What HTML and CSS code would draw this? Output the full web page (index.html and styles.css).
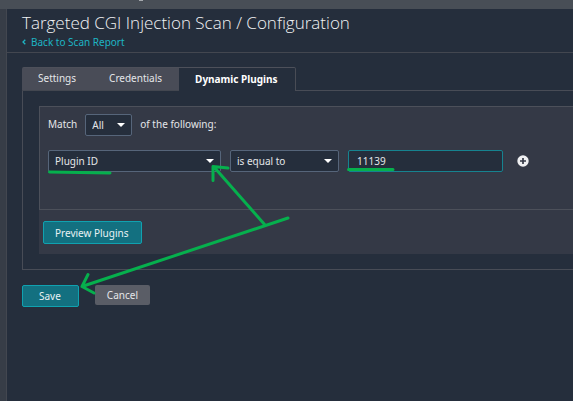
FILE: index.html
```html
<!DOCTYPE html>
<html lang="en">
<head>
<meta charset="utf-8">
<title>Targeted CGI Injection Scan / Configuration</title>
<link rel="stylesheet" href="styles.css">
</head>
<body>
<div class="topbar"></div>
<div class="shell">
  <aside class="rail"></aside>
  <main class="main">
    <header class="header">
      <h1 class="title">Targeted CGI Injection Scan / Configuration</h1>
      <a class="back" href="#"><svg class="chevron" viewBox="0 0 4 6" aria-hidden="true"><path d="M3.3 .7 1 3l2.3 2.3"/></svg>Back to Scan Report</a>
    </header>
    <form class="content">
      <nav class="tabs">
        <a class="tab" href="#">Settings</a>
        <a class="tab" href="#">Credentials</a>
        <a class="tab active" href="#">Dynamic Plugins</a>
      </nav>
      <section class="panel">
        <div class="filters">
          <div class="match">
            <label for="match">Match</label>
            <span class="select small"><select id="match"><option>All</option></select></span>
            <span>of the following:</span>
          </div>
          <div class="rule">
            <span class="select field"><select aria-label="Field"><option>Plugin ID</option></select></span>
            <span class="select operator"><select aria-label="Operator"><option>is equal to</option></select></span>
            <input class="value" type="text" aria-label="Value" value="11139">
            <button class="add" type="button" aria-label="Add filter"><svg viewBox="0 0 12 12"><circle cx="6" cy="6" r="5.7"/><path d="M6 3v6M3 6h6"/></svg></button>
          </div>
        </div>
        <div class="preview">
          <button class="button primary wide" type="button">Preview Plugins</button>
        </div>
      </section>
      <div class="actions">
        <button class="button primary" type="button">Save</button>
        <button class="button cancel" type="button">Cancel</button>
      </div>
    </form>
  </main>
</div>
<svg class="marks" width="573" height="401" viewBox="0 0 573 401" aria-hidden="true">
  <path d="M49.500 172 80 172.500 110 173M348.500 169.500H393"/>
  <path d="M265 225 214 167M228 168 213 166.500 213 180.500"/>
  <path d="M288 218 82 286.500M88 274.500 82 286.500 94 293"/>
</svg>
</body>
</html>
```
FILE: styles.css
```css
* { box-sizing: border-box; }

body {
  margin: 0;
  min-height: 100vh;
  display: flex;
  flex-direction: column;
  position: relative;
  overflow: hidden;
  background: #252e3c;
  color: #e4e6e9;
  font: 10px/16px "Noto Sans", "Open Sans", sans-serif;
}

a { text-decoration: none; }

button, input, select {
  font: inherit;
  color: inherit;
  margin: 0;
}

.topbar { height: 9px; background: #484e56; }

.topbar::before {
  content: "";
  display: block;
  width: 4px;
  height: 1px;
  margin-left: 139px;
  background: #a5a9ad;
}

.shell { flex: 1; display: flex; }

.rail {
  width: 7px;
  background: #373d47;
  border-right: 1px solid #434750;
}

.main { flex: 1; min-width: 0; }

.header {
  height: 44px;
  padding: 3px 15px 0;
  border-bottom: 1px solid #434750;
}

.title {
  margin: 0;
  font: 300 17px/22px "Open Sans", sans-serif;
  color: #f1f2f4;
  white-space: nowrap;
}

.back {
  display: flex;
  align-items: center;
  gap: 5px;
  color: #1eb5c4;
}

.chevron {
  width: 4px;
  height: 6px;
  fill: none;
  stroke: currentColor;
  stroke-width: 1.3;
}

.content { padding: 14px 0 0 15px; }

.tabs { display: flex; height: 23px; }

.tab {
  height: 24px;
  padding: 2px 17px 0 16px;
  background: #494c57;
  border-top: 1px solid #4d505a;
  border-bottom: 1px solid #434750;
  color: #e4e6e9;
}

.tab:first-child { border-radius: 2px 0 0; }

.tab.active {
  height: 24px;
  padding-top: 3px;
  background: #252e3c;
  border-right: 1px solid #494c55;
  border-bottom: 0;
  border-radius: 0 2px 0 0;
  color: #fff;
  font-weight: 700;
  position: relative;
}

.panel {
  padding: 15px 0 15px 16px;
  border: 1px solid #484c56;
  border-right: 0;
}

.filters {
  height: 104px;
  padding: 7px 8px 0;
  background: #343946;
  border: 1px solid #4c505a;
  border-right: 0;
}

.match {
  display: flex;
  align-items: center;
  gap: 8px;
  height: 22px;
  line-height: 14px;
}

.match label, .match > span:last-child { padding-bottom: 2px; }

.rule {
  display: flex;
  align-items: center;
  gap: 9px;
  margin-top: 14px;
}

.select { position: relative; height: 22px; }

.select::after {
  content: "";
  position: absolute;
  right: 7px;
  top: 9px;
  border: 4px solid transparent;
  border-top-color: #fff;
  border-bottom: 0;
  pointer-events: none;
}

.select select, .value {
  display: block;
  width: 100%;
  height: 22px;
  padding: 0 6px;
  appearance: none;
  background: #252e3c;
  border: 1px solid #56657a;
  border-radius: 2px;
  outline: 0;
}

.small { width: 47px; }
.field { width: 173px; }
.operator { width: 109px; }

.value {
  width: 155px;
  padding: 0 8px;
  border-color: #168390;
}

.add {
  width: 12px;
  height: 12px;
  margin-left: 5px;
  padding: 0;
  border: 0;
  background: none;
}

.add svg { display: block; width: 12px; height: 12px; }
.add circle { fill: #eff0f2; }
.add path { stroke: #343946; stroke-width: 1.7; }

.preview {
  height: 45px;
  padding: 11px 4px;
  background: #343946;
}

.filters + .preview { margin-top: -1px; border-top: 1px solid #4c505a; padding-top: 11px; }

.actions {
  display: flex;
  gap: 16px;
  padding-top: 15px;
}

.button {
  display: block;
  height: 22px;
  padding: 0 17px 0 16px;
  border: 1px solid #10a2b0;
  border-radius: 2px;
  line-height: 18px;
}

.primary { background: #137080; color: #e9f2f4; }
.wide { height: 23px; padding: 0 12px 0 11px; }

.cancel {
  height: 20px;
  padding: 0 12px;
  background: #5a5d66;
  border: 0;
}

.marks {
  position: absolute;
  left: 0;
  top: 0;
  fill: none;
  stroke: #06b04d;
  stroke-width: 3;
  stroke-linecap: round;
  stroke-linejoin: round;
  pointer-events: none;
}
```
